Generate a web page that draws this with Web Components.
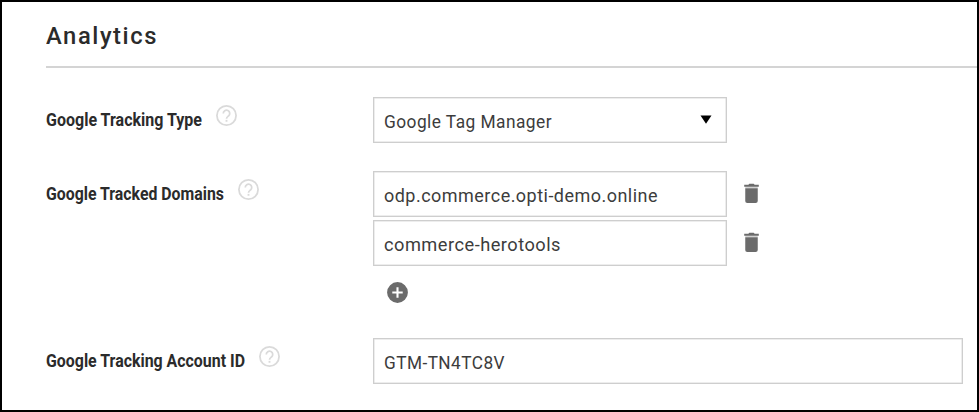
<!DOCTYPE html>
<html lang="en">
<head>
<meta charset="utf-8">
<title>Analytics</title>
<style>
  body {
    margin: 0;
    font-family: Roboto, "Liberation Sans", sans-serif;
    color: #2b2b2b;
  }
</style>
</head>
<body>
<settings-panel>
  <fit-text slot="title" width="112">Analytics</fit-text>
  <form-row label="Google Tracking Type" label-width="156" style="height: 74px">
    <text-box arrow><fit-text width="168">Google Tag Manager</fit-text></text-box>
  </form-row>
  <form-row label="Google Tracked Domains" label-width="178" style="height: 167px">
    <domain-item><fit-text width="274">odp.commerce.opti-demo.online</fit-text></domain-item>
    <domain-item><fit-text width="177">commerce-herotools</fit-text></domain-item>
    <app-icon name="add" style="margin: 14px 0 0 12px"></app-icon>
  </form-row>
  <form-row label="Google Tracking Account ID" label-width="199" style="height: 60px">
    <text-box wide><fit-text width="121">GTM-TN4TC8V</fit-text></text-box>
  </form-row>
</settings-panel>

<script>
const makeTemplate = (html) => {
  const template = document.createElement("template");
  template.innerHTML = html;
  return template;
};

class BaseElement extends HTMLElement {
  constructor() {
    super();
    this.attachShadow({ mode: "open" });
    this.shadowRoot.appendChild(this.constructor.template.content.cloneNode(true));
  }
}

// One line of text, narrowed or widened to the given width
class FitText extends BaseElement {
  static template = makeTemplate(`
    <style>
      :host { display: block; flex: none; white-space: nowrap; }
      span { display: inline-block; transform-origin: 0 50%; }
    </style>
    <span><slot></slot></span>
  `);

  connectedCallback() {
    const width = Number(this.getAttribute("width"));
    const span = this.shadowRoot.querySelector("span");
    this.style.width = width + "px";
    span.style.transform = `scaleX(${width / span.getBoundingClientRect().width})`;
  }
}

const icons = {
  help: `<circle cx="12" cy="12" r="9.2" fill="none" stroke="currentColor" stroke-width="1.7"/>
    <path d="M8.9 10a3.1 3.1 0 1 1 5 2.45c-1.1.85-1.9 1.35-1.9 2.75" fill="none" stroke="currentColor" stroke-width="1.7"/>
    <path d="M11.1 16.2h1.8v1.8h-1.8z"/>`,
  trash: `<path d="M5 3.7h4l.9-1h4.2l.9 1h4v1.8H5z"/>
    <path d="M6 5.5h12v1.5H6z" opacity=".3"/>
    <path d="M6 7h12v12.2a2 2 0 0 1-2 2H8a2 2 0 0 1-2-2z"/>`,
  add: `<path d="M12 2a10 10 0 1 0 0 20 10 10 0 0 0 0-20zm5 11h-4v4h-2v-4H7v-2h4V7h2v4h4z"/>`
};

class AppIcon extends BaseElement {
  static template = makeTemplate(`
    <style>
      :host { display: block; flex: none; width: 25px; height: 25px; color: #6b6b6b; }
      :host([name="help"]) { color: #dadada; }
      svg { display: block; width: 100%; height: 100%; }
    </style>
    <svg viewBox="0 0 24 24" fill="currentColor"></svg>
  `);

  connectedCallback() {
    this.shadowRoot.querySelector("svg").innerHTML = icons[this.getAttribute("name")];
  }
}

class TextBox extends BaseElement {
  static template = makeTemplate(`
    <style>
      :host {
        display: flex;
        align-items: center;
        justify-content: space-between;
        box-sizing: border-box;
        width: 354px;
        height: 46px;
        padding: 3px 14px 0 10px;
        border: 1px solid #cecece;
        box-shadow: inset 0 0 0 .5px #dcdcdc;
        font-size: 19px;
        letter-spacing: .5px;
        color: #3c3c3c;
      }
      :host([wide]) { width: 590px; }
      svg { display: none; width: 12px; height: 9px; margin-bottom: 4px; }
      :host([arrow]) svg { display: block; }
    </style>
    <slot></slot>
    <svg viewBox="0 0 12 9"><path d="M.5 .5h11L6 8.8z" fill="#000"/></svg>
  `);
}

// Text box with a delete button after it
class DomainItem extends BaseElement {
  static template = makeTemplate(`
    <style>
      :host { display: flex; align-items: center; gap: 12px; margin-bottom: 3px; }
      app-icon { margin-bottom: 2px; }
    </style>
    <text-box><slot></slot></text-box>
    <app-icon name="trash"></app-icon>
  `);
}

class FormRow extends BaseElement {
  static template = makeTemplate(`
    <style>
      :host { display: grid; grid-template-columns: 327px 1fr; align-items: start; }
      .label { display: flex; gap: 12px; padding-top: 6px; }
      .label fit-text { padding-top: 6px; font-size: 19px; line-height: 22px; font-weight: 700; }
    </style>
    <div class="label"></div>
    <div><slot></slot></div>
  `);

  connectedCallback() {
    this.shadowRoot.querySelector(".label").innerHTML = `
      <fit-text width="${this.getAttribute("label-width")}">${this.getAttribute("label")}</fit-text>
      <app-icon name="help"></app-icon>
    `;
  }
}

class SettingsPanel extends BaseElement {
  static template = makeTemplate(`
    <style>
      :host {
        display: block;
        box-sizing: border-box;
        width: 979px;
        height: 412px;
        padding-left: 44px;
        border: 2px solid #000;
        background: #fff;
        overflow: hidden;
      }
      header {
        box-sizing: border-box;
        height: 66px;
        margin-bottom: 29px;
        padding-top: 20px;
        border-bottom: 2px solid #d4d4d4;
        font-size: 24px;
        line-height: 28px;
        font-weight: 500;
        letter-spacing: 1.6px;
      }
    </style>
    <header><slot name="title"></slot></header>
    <slot></slot>
  `);
}

customElements.define("app-icon", AppIcon);
customElements.define("text-box", TextBox);
customElements.define("domain-item", DomainItem);
customElements.define("form-row", FormRow);
customElements.define("settings-panel", SettingsPanel);
// Measures its text, so the elements that set its font come first
customElements.define("fit-text", FitText);
</script>
</body>
</html>
